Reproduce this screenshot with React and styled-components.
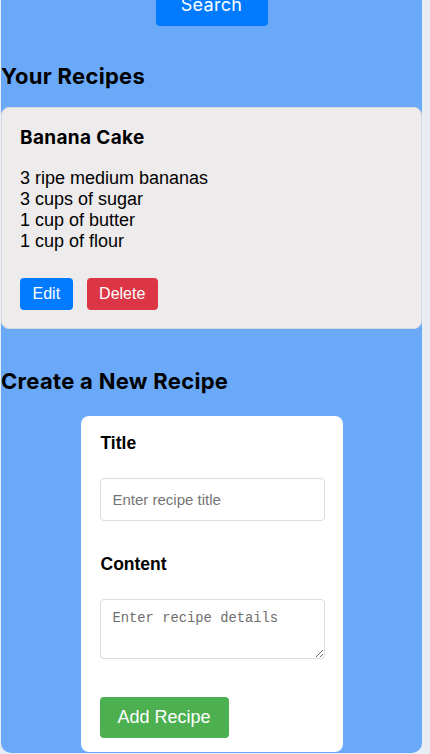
import styled, { createGlobalStyle } from 'styled-components';

const GlobalStyle = createGlobalStyle`
  html, body {
    margin: 0;
    padding: 0;
    background: #e8edf4;
  }
  body {
    font-family: "Liberation Sans", Arial, sans-serif;
    overflow: hidden;
  }
`;

const Page = styled.div`
  padding: 6px 8px 0 1px;
`;

const Panel = styled.main`
  background: #6aa9f8;
  border-radius: 10px;
  padding: 0 0 1px 0;
`;

const SearchRow = styled.form`
  display: flex;
  justify-content: center;
  margin-top: -23px;
`;

const SearchButton = styled.button`
  width: 112px;
  height: 43px;
  border: none;
  border-radius: 4px;
  background: #007bff;
  color: #fff;
  font-family: Inter, "Open Sans", sans-serif;
  font-size: 18px;
  letter-spacing: 0.3px;
  padding: 0;
`;

const Heading = styled.h2`
  margin: ${p => p.$top}px 0 0 0;
  font-family: Inter, "Open Sans", sans-serif;
  font-weight: 700;
  font-size: 22px;
  letter-spacing: 0.3px;
  line-height: 26px;
  color: #000;
`;

const RecipeCard = styled.div`
  margin-top: 18px;
  background: #eeebec;
  border: 1px solid #d9d9de;
  border-radius: 8px;
  padding: 18px;
`;

const RecipeTitle = styled.h3`
  margin: 0;
  font-family: Inter, "Open Sans", sans-serif;
  font-weight: 700;
  font-size: 19px;
  letter-spacing: 0.35px;
  line-height: 24px;
`;

const RecipeBody = styled.p`
  margin: 18px 0 0 0;
  font-size: 18px;
  line-height: 21px;
  white-space: pre-line;
`;

const Actions = styled.div`
  display: flex;
  gap: 14px;
  margin-top: 26px;
`;

const ActionButton = styled.button`
  border: none;
  border-radius: 4px;
  background: ${p => p.$bg};
  color: #fff;
  font-family: "Liberation Sans", Arial, sans-serif;
  font-size: 16px;
  line-height: 18px;
  height: 32px;
  padding: 0 12.5px;
`;

const FormCard = styled.form`
  width: 225px;
  margin: 22px auto 0 auto;
  background: #fff;
  border-radius: 8px;
  padding: 17px 18px 14px 19px;
  display: flex;
  flex-direction: column;
`;

const Label = styled.label`
  font-weight: 700;
  font-size: 17.5px;
  line-height: 20px;
  padding-left: 1px;
  margin-top: ${p => p.$top || 0}px;
`;

const TextInput = styled.input`
  box-sizing: border-box;
  margin-top: 25px;
  width: 100%;
  height: 43px;
  border: 1px solid #dcdcdc;
  border-radius: 4px;
  padding: 0 12px;
  font-family: "Liberation Sans", Arial, sans-serif;
  font-size: 15px;
  &::placeholder { color: #757575; }
`;

const TextArea = styled.textarea`
  box-sizing: border-box;
  margin-top: 25px;
  width: 100%;
  height: 60px;
  border: 1px solid #dcdcdc;
  border-radius: 4px;
  padding: 11px 12px;
  font-family: "Liberation Mono", monospace;
  font-size: 13.8px;
  &::placeholder { color: #6e6e6e; }
`;

const AddButton = styled.button`
  align-self: flex-start;
  margin-top: 38px;
  border: none;
  border-radius: 4px;
  background: #4caf50;
  color: #fff;
  font-family: "Liberation Sans", Arial, sans-serif;
  font-size: 18px;
  line-height: 21px;
  padding: 10px 18px;
`;

const ingredients = [
  '3 ripe medium bananas',
  '3 cups of sugar',
  '1 cup of butter',
  '1 cup of flour',
];

export default function App() {
  return (
    <>
      <GlobalStyle />
      <Page>
        <Panel>
          <SearchRow onSubmit={e => e.preventDefault()}>
            <SearchButton type="submit">Search</SearchButton>
          </SearchRow>
          <Heading $top={37}>Your Recipes</Heading>
          <RecipeCard>
            <RecipeTitle>Banana Cake</RecipeTitle>
            <RecipeBody>{ingredients.join('\n')}</RecipeBody>
            <Actions>
              <ActionButton $bg="#007bff">Edit</ActionButton>
              <ActionButton $bg="#dc3545">Delete</ActionButton>
            </Actions>
          </RecipeCard>
          <Heading $top={39}>Create a New Recipe</Heading>
          <FormCard onSubmit={e => e.preventDefault()}>
            <Label>Title</Label>
            <TextInput placeholder="Enter recipe title" />
            <Label $top={33}>Content</Label>
            <TextArea placeholder="Enter recipe details" />
            <AddButton type="submit">Add Recipe</AddButton>
          </FormCard>
        </Panel>
      </Page>
    </>
  );
}
